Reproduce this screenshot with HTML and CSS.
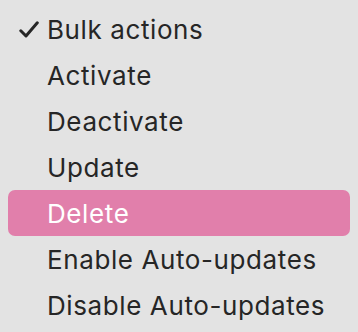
FILE: index.html
```html
<!DOCTYPE html>
<html lang="en">
<head>
  <meta charset="UTF-8" />
  <title>Bulk actions</title>
  <link rel="stylesheet" href="styles.css">
</head>
<body>
  <ul class="menu">
    <li class="item checked">
      <span class="check">
        <svg width="20" height="17" viewBox="0 0 20 17"><path d="M1.8 9.8 L7 15 L18.3 1.8" fill="none" stroke="#262626" stroke-width="3" stroke-linecap="round" stroke-linejoin="round"/></svg>
      </span>
      <span class="label">Bulk actions</span>
    </li>
    <li class="item"><span class="check"></span><span class="label">Activate</span></li>
    <li class="item"><span class="check"></span><span class="label">Deactivate</span></li>
    <li class="item"><span class="check"></span><span class="label">Update</span></li>
    <li class="item active"><span class="check"></span><span class="label">Delete</span></li>
    <li class="item"><span class="check"></span><span class="label">Enable Auto-updates</span></li>
    <li class="item"><span class="check"></span><span class="label">Disable Auto-updates</span></li>
  </ul>
</body>
</html>
```

FILE: styles.css
```css
html, body {
  margin: 0;
  padding: 0;
  background: #e3e3e3;
}
body {
  width: 358px;
  height: 332px;
  overflow: hidden;
  font-family: Inter, "Noto Sans", sans-serif;
  color: #262626;
}
.menu {
  list-style: none;
  margin: 0;
  padding: 6px 8px 4px 8px;
}
.item {
  display: flex;
  align-items: center;
  height: 46px;
  border-radius: 7px;
  font-size: 26px;
}
.check {
  width: 39px;
  display: flex;
  justify-content: flex-start;
  padding-left: 11px;
  box-sizing: border-box;
}
.check svg {
  display: block;
  margin-top: 1px;
}
.label {
  letter-spacing: 0.6px;
  margin-top: 1px;
}
.active {
  background: #e17fab;
  color: #ffffff;
}
```
